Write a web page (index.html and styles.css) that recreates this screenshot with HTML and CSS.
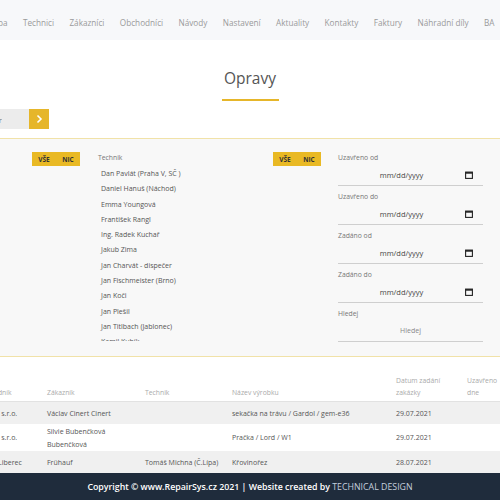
FILE: index.html
```html
<!DOCTYPE html>
<html>
<head>
	<title>Opravy</title>
	<link rel="stylesheet" href="styles.css">
</head>
<body>
	<div class="viewport">
		<nav class="topnav">
			<a href="#">Mapa</a>
			<a href="#">Technici</a>
			<a href="#">Zákazníci</a>
			<a href="#">Obchodníci</a>
			<a href="#">Návody</a>
			<a href="#">Nastavení</a>
			<a href="#">Aktuality</a>
			<a href="#">Kontakty</a>
			<a href="#">Faktury</a>
			<a href="#">Náhradní díly</a>
			<a href="#">BA</a>
		</nav>

		<h1 class="page-title">Opravy</h1>

		<div class="search-row">
			<input type="text" class="search-input" value="Filtr">
			<button class="search-btn">
				<svg width="10" height="10" viewBox="0 0 10 10"><path d="M3.5 1.5 L7 5 L3.5 8.5" fill="none" stroke="#fff" stroke-width="1.6"/></svg>
			</button>
		</div>

		<div class="filters">
			<div class="toggle"><span>VŠE</span><span>NIC</span></div>

			<div class="tech-col">
				<div class="field-label">Technik</div>
				<ul class="tech-list">
					<li>Dan Pavlát (Praha V, SČ )</li>
					<li>Daniel Hanuš (Náchod)</li>
					<li>Emma Youngová</li>
					<li>František Rangl</li>
					<li>Ing. Radek Kuchař</li>
					<li>Jakub Zima</li>
					<li>Jan Charvát - dispečer</li>
					<li>Jan Fischmeister (Brno)</li>
					<li>Jan Koči</li>
					<li>Jan Plešil</li>
					<li>Jan Titlbach (Jablonec)</li>
					<li>Kamil Kubík</li>
					<li>Karel Novák</li>
				</ul>
			</div>

			<div class="toggle"><span>VŠE</span><span>NIC</span></div>

			<div class="dates">
				<div class="field">
					<div class="field-label">Uzavřeno od</div>
					<div class="date-input"><span>mm/dd/yyyy</span><svg width="8" height="8" viewBox="0 0 8 8"><rect x="0.6" y="1.1" width="6.8" height="6.3" fill="none" stroke="#222" stroke-width="1.1"/><rect x="0.6" y="1.1" width="6.8" height="1.6" fill="#222"/></svg></div>
				</div>
				<div class="field">
					<div class="field-label">Uzavřeno do</div>
					<div class="date-input"><span>mm/dd/yyyy</span><svg width="8" height="8" viewBox="0 0 8 8"><rect x="0.6" y="1.1" width="6.8" height="6.3" fill="none" stroke="#222" stroke-width="1.1"/><rect x="0.6" y="1.1" width="6.8" height="1.6" fill="#222"/></svg></div>
				</div>
				<div class="field">
					<div class="field-label">Zadáno od</div>
					<div class="date-input"><span>mm/dd/yyyy</span><svg width="8" height="8" viewBox="0 0 8 8"><rect x="0.6" y="1.1" width="6.8" height="6.3" fill="none" stroke="#222" stroke-width="1.1"/><rect x="0.6" y="1.1" width="6.8" height="1.6" fill="#222"/></svg></div>
				</div>
				<div class="field">
					<div class="field-label">Zadáno do</div>
					<div class="date-input"><span>mm/dd/yyyy</span><svg width="8" height="8" viewBox="0 0 8 8"><rect x="0.6" y="1.1" width="6.8" height="6.3" fill="none" stroke="#222" stroke-width="1.1"/><rect x="0.6" y="1.1" width="6.8" height="1.6" fill="#222"/></svg></div>
				</div>
				<div class="field">
					<div class="field-label">Hledej</div>
					<input type="text" class="text-input" placeholder="Hledej">
				</div>
			</div>
		</div>

		<table class="orders">
			<colgroup>
				<col style="width:70px"><col style="width:98px"><col style="width:87px"><col style="width:164px"><col style="width:71px"><col style="width:45px"><col style="width:40px">
			</colgroup>
			<thead>
				<tr>
					<th>Obchodník</th>
					<th>Zákazník</th>
					<th>Technik</th>
					<th>Název výrobku</th>
					<th>Datum zadání zakázky</th>
					<th>Uzavřeno dne</th>
					<th></th>
				</tr>
			</thead>
			<tbody>
				<tr class="odd">
					<td>Rapida s.r.o.</td>
					<td>Václav Cinert Cinert</td>
					<td></td>
					<td>sekačka na trávu / Gardol / gem-e36</td>
					<td>29.07.2021</td>
					<td></td>
					<td></td>
				</tr>
				<tr>
					<td>Rapida s.r.o.</td>
					<td class="wrap">Silvie Bubenčková Bubenčková</td>
					<td></td>
					<td>Pračka / Lord / W1</td>
					<td>29.07.2021</td>
					<td></td>
					<td></td>
				</tr>
				<tr class="odd">
					<td>Servis Liberec</td>
					<td>Frühauf</td>
					<td>Tomáš Michna (Č.Lípa)</td>
					<td>Křovinořez</td>
					<td>28.07.2021</td>
					<td></td>
					<td></td>
				</tr>
			</tbody>
		</table>

		<footer class="footer">
			Copyright © www.RepairSys.cz 2021 | Website created by <span class="brand">TECHNICAL DESIGN</span>
		</footer>
	</div>
</body>
</html>
```

FILE: styles.css
```css
body {
	margin: 0;
	font-family: 'Open Sans', 'Liberation Sans', sans-serif;
	background-color: #fff;
	color: #444;
}
.viewport {
	width: 500px;
	height: 500px;
	overflow: hidden;
}

/* top navigation, page is scrolled a bit to the right */
.topnav {
	display: flex;
	gap: 15.4px;
	height: 40px;
	align-items: center;
	padding-top: 4px;
	box-sizing: border-box;
	background-color: #f7f8fa;
	margin-left: -14px;
	white-space: nowrap;
}
.topnav a {
	color: #9a9a9a;
	font-size: 8.2px;
	text-decoration: none;
}

.page-title {
	margin: 27px auto 0;
	width: 57px;
	padding-bottom: 10px;
	border-bottom: 2px solid #e6b62a;
	text-align: center;
	font-size: 15.5px;
	font-weight: 400;
	color: #555;
	line-height: 22px;
}

.search-row {
	display: flex;
	margin: 8px 0 0 -100px;
	height: 20px;
}
.search-input {
	width: 129px;
	height: 20px;
	box-sizing: border-box;
	border: none;
	background-color: #ececec;
	font-family: inherit;
	font-size: 8px;
	color: #777;
	text-align: right;
	padding: 0 27px 0 0;
}
.search-btn {
	width: 20px;
	height: 20px;
	border: none;
	padding: 0;
	background-color: #e6b62a;
	display: flex;
	align-items: center;
	justify-content: center;
}

/* filter panel */
.filters {
	display: flex;
	align-items: flex-start;
	margin-top: 9px;
	height: 219px;
	padding: 13px 0 0 32px;
	box-sizing: border-box;
	background-color: #f8f8f8;
	border-top: 1px solid #f1e2a8;
	border-bottom: 1px solid #f1e2a8;
}
.toggle {
	display: flex;
	justify-content: space-around;
	align-items: center;
	width: 48px;
	height: 14px;
	background-color: #e9b924;
	font-size: 6.5px;
	font-weight: 700;
	color: #333;
}
.field-label {
	font-size: 6.8px;
	line-height: 12px;
	color: #777;
}
.tech-col {
	width: 175px;
	margin-left: 18px;
}
.tech-list {
	list-style: none;
	margin: 2px 0 0;
	padding: 0 0 0 3px;
	height: 175px;
	overflow: hidden;
}
.tech-list li {
	font-size: 7px;
	line-height: 15.3px;
	color: #555;
	white-space: nowrap;
}
.dates {
	width: 145px;
	margin-left: 17px;
}
.field {
	margin-bottom: 5px;
}
.date-input {
	display: flex;
	align-items: center;
	height: 21px;
	border-bottom: 1px solid #cfcfcf;
	font-size: 7.5px;
	color: #444;
}
.date-input span {
	flex: 1;
	text-align: center;
	padding-left: 20px;
}
.date-input svg {
	margin: 0 10px 0 20px;
}
.text-input {
	display: block;
	width: 100%;
	height: 22px;
	border: none;
	border-bottom: 1px solid #cfcfcf;
	background: transparent;
	box-sizing: border-box;
	text-align: center;
	font-family: inherit;
	font-size: 7px;
	padding: 0;
}
.text-input::placeholder {
	color: #888;
}

/* orders table */
.orders {
	margin: 13px 0 0 -30px;
	border-collapse: collapse;
	table-layout: fixed;
	width: 575px;
}
.orders th {
	height: 29px;
	padding: 0 7px 2px;
	vertical-align: bottom;
	text-align: left;
	font-size: 6.8px;
	line-height: 12px;
	font-weight: 400;
	color: #aaa;
	border-bottom: 1px solid #e2e2e2;
}
.orders td {
	height: 22px;
	padding: 0 7px;
	font-size: 7px;
	line-height: 13px;
	color: #555;
	white-space: nowrap;
	overflow: hidden;
}
.orders td.wrap {
	white-space: normal;
	height: 27px;
}
.orders tr.odd {
	background-color: #f0f0f0;
}

.footer {
	height: 28px;
	line-height: 28px;
	background-color: #1f2c3c;
	color: #fff;
	text-align: center;
	font-size: 8.8px;
	font-weight: 600;
}
.footer .brand {
	color: #c5cfdc;
	font-weight: 400;
}
```
